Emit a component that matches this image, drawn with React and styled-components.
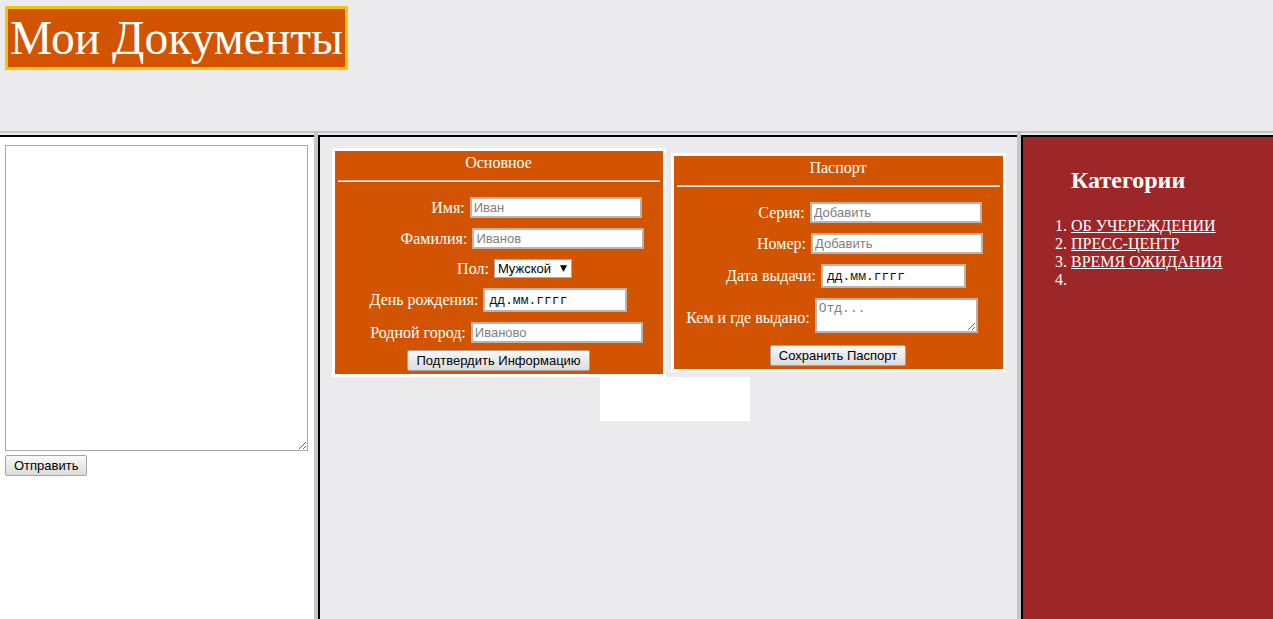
import styled, { createGlobalStyle } from "styled-components";

const GlobalStyle = createGlobalStyle`
  html, body {
    margin: 0;
    padding: 0;
  }
  body {
    font-family: "Liberation Serif", "Times New Roman", serif;
    background: #ebebee;
  }
`;

const Page = styled.div`
  display: flex;
  flex-direction: column;
  height: 100vh;
  overflow: hidden;
`;

const Header = styled.header`
  flex-shrink: 0;
  height: 125px;
  padding: 6px 0 0 5px;
  border-bottom: 2px solid #c3c3c3;
  background: #ebebee;
`;

const Title = styled.h1`
  display: inline-block;
  margin: 0;
  padding: 0 2px;
  border: 3px solid #f1c40f;
  background: #d35400;
  color: #fff;
  font-size: 47.5px;
  font-weight: normal;
  line-height: 58px;
`;

const Workspace = styled.div`
  flex: 1;
  display: flex;
  min-height: 0;
`;

const Pane = styled.section`
  box-sizing: border-box;
  margin-top: 2px;
  border-top: 2px solid #000;
`;

const LeftPane = styled(Pane)`
  width: 314px;
  flex-shrink: 0;
  display: flex;
  flex-direction: column;
  align-items: flex-start;
  gap: 4px;
  padding: 8px 5px;
  background: #fff;
`;

const CenterPane = styled(Pane)`
  flex: 1;
  padding-top: 11px;
  border-left: 2px solid #000;
  background: #ebebee;
`;

const RightPane = styled(Pane)`
  width: 252px;
  flex-shrink: 0;
  padding: 10px 8px;
  border-left: 2px solid #000;
  background: #9d2629;
  color: #fff;
`;

const Splitter = styled.div`
  width: 4px;
  flex-shrink: 0;
  background: #c6c6c6;
`;

const Controls = `
  font-family: "Liberation Sans", Arial, sans-serif;
  font-size: 13px;
`;

const Message = styled.textarea`
  box-sizing: border-box;
  width: 303px;
  height: 306px;
  margin: 0;
  border: 1px solid #a9a9a9;
  ${Controls}
`;

const Button = styled.button`
  box-sizing: border-box;
  height: 21px;
  margin: ${(p) => p.$top || 0}px 0 0;
  padding: 0 8px;
  border: 1px solid #a3a3a3;
  border-radius: 2px;
  background: linear-gradient(#f8f8f8, #dcdcdc);
  color: #000;
  ${Controls}
`;

const Cards = styled.div`
  display: flex;
  justify-content: center;
  align-items: center;
  gap: 5px;
`;

const Card = styled.form`
  box-sizing: border-box;
  width: ${(p) => p.$width}px;
  padding: 3px;
  border: 3px solid #fff;
  background: #d35400;
  color: #fff;
  display: flex;
  flex-direction: column;
  align-items: center;
`;

const CardTitle = styled.div`
  font-size: 16px;
  line-height: 18px;
`;

const Divider = styled.hr`
  align-self: stretch;
  margin: 8px 0 15px;
  height: 0;
  border: 0;
  border-top: 1px solid #c4bcb8;
  border-bottom: 1px solid #f2f2f2;
`;

const Fields = styled.div`
  align-self: stretch;
  display: flex;
  flex-direction: column;
  gap: 10px;
`;

const Field = styled.label`
  display: flex;
  justify-content: center;
  align-items: ${(p) => (p.$bottom ? "flex-end" : "center")};
  gap: 5px;
  font-size: 16px;
  line-height: 18px;
  ${(p) =>
    p.$shift > 0
      ? `padding-left: ${p.$shift * 2}px;`
      : `padding-right: ${-p.$shift * 2}px;`}

  & > span {
    margin-bottom: ${(p) => (p.$bottom ? 6 : 0)}px;
  }
`;

const TextInput = styled.input`
  box-sizing: border-box;
  width: 172px;
  height: 21px;
  margin: 0;
  padding: 1px 2px;
  border: 2px solid #bcb2aa;
  background: #fff;
  color: #000;
  ${Controls}

  &::placeholder {
    color: #808080;
  }
`;

const DateInput = styled(TextInput)`
  width: ${(p) => p.$width}px;
  height: 24px;
  padding: 1px 4px;
  font-family: "Liberation Mono", "Courier New", monospace;

  &::placeholder {
    color: #111;
  }
`;

const Note = styled.textarea`
  box-sizing: border-box;
  width: 163px;
  height: 35px;
  margin: 0;
  padding: 1px 2px;
  border: 2px solid #bcb2aa;
  font-family: "Liberation Mono", "Courier New", monospace;
  font-size: 13px;

  &::placeholder {
    color: #808080;
  }
`;

const SelectWrap = styled.span`
  position: relative;
  display: inline-flex;
`;

const Select = styled.select`
  box-sizing: border-box;
  width: 78px;
  height: 19px;
  margin: 0;
  padding: 0 14px 0 3px;
  border: 1px solid #a9a9a9;
  border-radius: 0;
  background: #fff;
  color: #000;
  appearance: none;
  ${Controls}
`;

const Arrow = styled.span`
  position: absolute;
  right: 5px;
  top: 4px;
  font-family: "DejaVu Sans", sans-serif;
  font-size: 9px;
  line-height: 10px;
  color: #000;
  pointer-events: none;
`;

const Frame = styled.div`
  width: 150px;
  height: 44px;
  margin-left: 280px;
  background: #fff;
`;

const Heading = styled.h2`
  margin: 20px 0 23px 40px;
  font-size: 24px;
  font-weight: bold;
`;

const Menu = styled.ol`
  margin: 0;
  padding-left: 40px;
  font-size: 16px;
  line-height: 18px;
`;

const MenuLink = styled.a`
  color: #fff;
  text-decoration: underline;
`;

export default function App() {
  return (
    <Page>
      <GlobalStyle />
      <Header>
        <Title>Мои Документы</Title>
      </Header>
      <Workspace>
        <LeftPane>
          <Message />
          <Button type="button">Отправить</Button>
        </LeftPane>
        <Splitter />
        <CenterPane>
          <Cards>
            <Card $width={334}>
              <CardTitle>Основное</CardTitle>
              <Divider />
              <Fields>
                <Field $shift={38}>
                  <span>Имя:</span>
                  <TextInput placeholder="Иван" />
                </Field>
                <Field $shift={24}>
                  <span>Фамилия:</span>
                  <TextInput placeholder="Иванов" />
                </Field>
                <Field $shift={16}>
                  <span>Пол:</span>
                  <SelectWrap>
                    <Select defaultValue="m">
                      <option value="m">Мужской</option>
                      <option value="f">Женский</option>
                    </Select>
                    <Arrow>▼</Arrow>
                  </SelectWrap>
                </Field>
                <Field $shift={0}>
                  <span>День рождения:</span>
                  <DateInput $width={144} placeholder="дд.мм.гггг" />
                </Field>
                <Field $shift={8}>
                  <span>Родной город:</span>
                  <TextInput placeholder="Иваново" />
                </Field>
              </Fields>
              <Button type="button" $top={7}>
                Подтвердить Информацию
              </Button>
            </Card>
            <Card $width={335}>
              <CardTitle>Паспорт</CardTitle>
              <Divider />
              <Fields>
                <Field $shift={32}>
                  <span>Серия:</span>
                  <TextInput placeholder="Добавить" />
                </Field>
                <Field $shift={32}>
                  <span>Номер:</span>
                  <TextInput placeholder="Добавить" />
                </Field>
                <Field $shift={8}>
                  <span>Дата выдачи:</span>
                  <DateInput $width={145} placeholder="дд.мм.гггг" />
                </Field>
                <Field $shift={-6} $bottom>
                  <span>Кем и где выдано:</span>
                  <Note placeholder="Отд..." />
                </Field>
              </Fields>
              <Button type="button" $top={12}>
                Сохранить Паспорт
              </Button>
            </Card>
          </Cards>
          <Frame />
        </CenterPane>
        <Splitter />
        <RightPane>
          <Heading>Категории</Heading>
          <Menu>
            <li>
              <MenuLink href="#">ОБ УЧЕРЕЖДЕНИИ</MenuLink>
            </li>
            <li>
              <MenuLink href="#">ПРЕСС-ЦЕНТР</MenuLink>
            </li>
            <li>
              <MenuLink href="#">ВРЕМЯ ОЖИДАНИЯ</MenuLink>
            </li>
            <li>{"\u00a0"}</li>
          </Menu>
        </RightPane>
      </Workspace>
    </Page>
  );
}
